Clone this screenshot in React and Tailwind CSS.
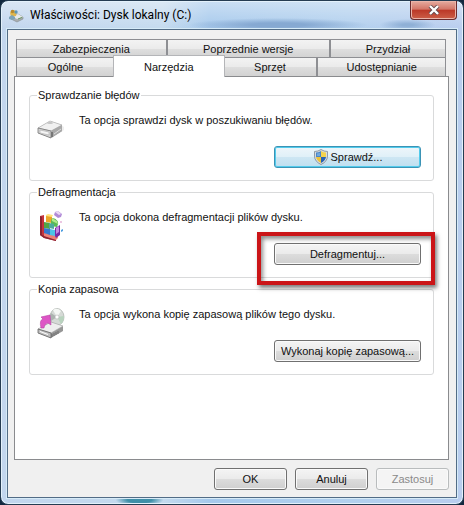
import React from "react";

const face =
  "h-[22px] rounded-[3px] border text-center leading-[18px] whitespace-nowrap";
const normalFace =
  "border-[#707070] bg-[linear-gradient(#f4f4f4,#ebebeb_48%,#dcdcdc_52%,#cfcfcf)] shadow-[inset_0_0_0_1px_#fafafa]";
const focusFace =
  "border-[#3b93b5] bg-[linear-gradient(#eef6fa,#e0f0f8_48%,#cde6f3_52%,#bfdff0)] shadow-[inset_0_0_0_1px_#52cbec]";
const disabledFace =
  "border-[#b9bcbd] bg-[#f4f4f4] text-[#8a8a8a] shadow-[inset_0_0_0_1px_#fafafa]";
const tabFace =
  "h-[19px] border border-[#8e8f93] border-b-0 bg-[linear-gradient(#f3f3f3,#ebebeb_48%,#dedede_52%,#d2d2d2)] leading-[18px]";

function TitleIcon() {
  return (
    <svg width="16" height="16" viewBox="0 0 16 16" aria-hidden="true">
      <path d="M3 9 10 7l5 3v2l-6 3-6-3z" fill="#a9aeb0" stroke="#858c90" strokeWidth=".6" />
      <path d="m3 9 7-2 5 3-6 2z" fill="#e6e9e9" />
      <path d="M2 5.5 6 3l3 2-1 4-5 1z" fill="#e0b64b" />
      <circle cx="4.5" cy="4.5" r="1.8" fill="#b8892e" />
      <circle cx="8" cy="5" r="1.7" fill="#5f96b5" />
      <path d="m1 10 3-2 3 2v2l-3 1-3-1z" fill="#7da3b8" />
      <path d="m10 12 4-1.600" stroke="#6c9964" />
    </svg>
  );
}

function DriveIcon() {
  return (
    <svg width="30" height="32" viewBox="0 0 30 32" aria-hidden="true">
      <path d="m2 19 13 6 12-8v-3l-3-2-10-4z" fill="#dedede" opacity=".5" />
      <path d="m1 15 12-7 12 4v6l-11 7L1 20z" fill="#929292" />
      <path d="m1 15 12-7 12 4-11 6z" fill="#f1f1f1" stroke="#b7b7b7" strokeWidth=".7" />
      <path d="m1 15 13 3v7L1 20z" fill="#d5d5d5" stroke="#777" strokeWidth=".8" />
      <path d="m3 17 9 2v3l-9-2z" fill="#f5f5f5" stroke="#a0a0a0" strokeWidth=".5" />
      <path d="m14 18 11-6v6l-11 7z" fill="#a9a9a9" />
      <path d="M15 19v5" stroke="#555" strokeWidth="1.200" />
      <path d="m17 21 7-5" stroke="#ddd" />
      <ellipse cx="13" cy="10" rx="3" ry="1" fill="#c4c4c4" />
    </svg>
  );
}

function DefragIcon() {
  return (
    <svg width="30" height="32" viewBox="0 0 30 32" aria-hidden="true">
      <path d="m3 6 4-1v18l12 3v5L7 28l-4-3z" fill="#c5343d" />
      <path d="m3 6 2 1v18l14 4v2L7 28l-4-3z" fill="#8d2433" />
      <path d="m7 23 12 3 2-1v3l-2 2-12-4z" fill="#ed8178" />
      <path d="m9 5 6 1v7l-6-1z" fill="#eda629" />
      <path d="m9 5 2-1 5 1-1 2-6-1z" fill="#ffe47b" />
      <path d="m7 12 6 1v6l-6-1z" fill="#51a644" />
      <path d="m14 11 1-3c3 0 7 3 6 6l-1 3-6-1z" fill="#5cba56" />
      <path d="m15 8 5 3 1 3-6-3z" fill="#b3e98b" />
      <path d="m7 18 6 1v6l-6-2z" fill="#3579d0" />
      <path d="m13 19 5 1v6l-5-1z" fill="#4cc3e7" />
      <path d="m12 13 5 1v5l-5-1z" fill="#4eaa9d" />
      <path d="m18 18 5-3v10l-4 3-1-2z" fill="#782ba6" />
      <path d="m19 18 3-2v6l-3 2z" fill="#c385e1" />
      <path d="m18 2 3-1 4 3-1 3-3 1-4-3z" fill="#b18bd7" />
      <path d="m18 2 4 3 2-1-3-3z" fill="#ead8f5" />
      <path d="m24 20 2-1v2l-2 1z" fill="#4d9ee0" />
      <path d="m23 12 1-1 1 1-1 1z" fill="#d98ec6" />
    </svg>
  );
}

function BackupIcon() {
  return (
    <svg width="30" height="32" viewBox="0 0 30 32" aria-hidden="true">
      <ellipse cx="20" cy="10" rx="7" ry="8.500" fill="#d5dad6" stroke="#a9afab" strokeWidth=".7" />
      <path d="M20 10 16 3q4-3 8 1z" fill="#f5f8f5" />
      <path d="m20 10 7-1q0 5-3 8z" fill="#b8d3be" />
      <path d="m20 10-6-4q-2 4 0 8z" fill="#acb4b0" />
      <circle cx="20" cy="10" r="2" fill="#fff" stroke="#aaa" strokeWidth=".5" />
      <path d="m1 22 13-7 12 4v5l-12 7-13-5z" fill="#969696" />
      <path d="m1 22 13-7 12 4-12 7z" fill="#eee" stroke="#aaa" strokeWidth=".6" />
      <path d="m1 22 13 4v5L1 26z" fill="#bdbdbd" stroke="#666" strokeWidth=".8" />
      <path d="m3 24 8 3v1l-8-3z" fill="#fff" />
      <path d="M15 27v3m2-4v3m2-4v3m2-4v3" stroke="#666" strokeWidth=".8" />
      <path d="M4 21Q2 13 6 12L4 10l9-2 1 10-3-2q-4 1-4 5z" fill="#dd55c5" stroke="#b940a4" strokeWidth=".6" />
    </svg>
  );
}

function ShieldIcon() {
  return (
    <svg width="16" height="16" viewBox="0 0 16 16" aria-hidden="true">
      <path d="M8 .5Q5 2.500 1.500 2.500V7q0 5.500 6.500 8.500 6.500-3 6.500-8.500V2.500Q11 2.500 8 .5" fill="#d7dde2" stroke="#7c8790" strokeWidth=".8" />
      <path d="M8 2Q5.500 3.500 3 3.500V8h5z" fill="#4a86c8" />
      <path d="M8 2q2.500 1.500 5 1.500V8H8z" fill="#f3d34d" />
      <path d="M3 8h5v6Q3.500 11.500 3 8" fill="#eec338" />
      <path d="M8 8h5q-.5 3.500-5 6z" fill="#2763b5" />
      <path d="M4 4.500 7 4v3H4z" fill="#72a9dc" />
    </svg>
  );
}

function Group({ title, text, icon, children }) {
  return (
    <fieldset className="flex h-[93px] flex-col rounded-[3px] border border-[#d9dadb] pr-3 pl-[7px]">
      <legend className="px-px leading-[14px]">{title}</legend>
      <div className="flex h-11 items-start gap-3 pt-[11px]">
        {icon}
        <p className="leading-[14px]">{text}</p>
      </div>
      <div className="flex justify-end">{children}</div>
    </fieldset>
  );
}

export default function App() {
  return (
    <div className="flex min-h-screen bg-[#12283f] font-['Liberation_Sans',Arial,sans-serif] text-[11px] text-[#111]">
      <main className="flex flex-1 flex-col rounded-[8px] border border-[#253c52] bg-[radial-gradient(90px_7px_at_60%_24px,#86a9d2_30%,#86a9d200),radial-gradient(28px_6px_at_88%_24px,#8fb0d6_20%,#8fb0d600),radial-gradient(24px_6px_at_30%_calc(100%_-_4px),#3f8fa8_50%,#3f8fa800),linear-gradient(#ffffff66,#ffffff00_28px),linear-gradient(90deg,#c2d6ee,#c4daee_35%,#a6c9ec_45%,#b2d0ee_75%,#b9cdee)] px-[6px] pb-[6px] shadow-[inset_0_0_0_1px_#e3f1fb]">
        <header className="flex h-7 items-start justify-between pl-px">
          <div className="flex h-7 items-center gap-[6px]">
            <TitleIcon />
            <h1 className="font-[Roboto,'Noto_Sans',sans-serif] text-[12px] leading-4 text-black">
              Właściwości: Dysk lokalny (C:)
            </h1>
          </div>
          <button
            type="button"
            aria-label="Zamknij"
            className="flex h-[19px] w-[47px] items-center justify-center rounded-b-[4px] border border-t-0 border-[#6a2b2e] bg-[linear-gradient(#e6aca0,#d37567_46%,#bb3727_50%,#cc5f48)] shadow-[inset_0_0_0_1px_#eab4a9]"
          >
            <svg width="12" height="10" viewBox="0 0 12 10" aria-hidden="true">
              <path d="m2 1 8 8m0-8L2 9" stroke="#62484d" strokeWidth="4" />
              <path d="m2 1 8 8m0-8L2 9" stroke="#fff" strokeWidth="2.400" />
            </svg>
          </button>
        </header>

        <section className="flex flex-1 flex-col border border-[#526c86] bg-[#f0f0f0] pt-[9px] pr-[7px] pb-[7px] pl-[6px] shadow-[0_0_0_1px_#d6ebf8]">
          <div role="tablist" className="pr-[3px] pl-[2px]">
            <div className="flex">
              <button type="button" role="tab" className={`${tabFace} w-[35%]`}>
                Zabezpieczenia
              </button>
              <button type="button" role="tab" className={`${tabFace} w-[38%]`}>
                Poprzednie wersje
              </button>
              <button type="button" role="tab" className={`${tabFace} flex-1`}>
                Przydział
              </button>
            </div>
            <div className="-mt-px flex">
              <button type="button" role="tab" className={`${tabFace} w-[23%]`}>
                Ogólne
              </button>
              <button
                type="button"
                role="tab"
                aria-selected="true"
                className="relative z-10 -mx-[2px] -mt-[2px] -mb-px h-[22px] w-[26%] border border-b-0 border-[#b4b5b8] bg-white leading-[18px]"
              >
                Narzędzia
              </button>
              <button type="button" role="tab" className={`${tabFace} w-[22%]`}>
                Sprzęt
              </button>
              <button type="button" role="tab" className={`${tabFace} flex-1`}>
                Udostępnianie
              </button>
            </div>
          </div>

          <div
            role="tabpanel"
            className="flex flex-1 flex-col gap-1 border border-[#8a8b8e] bg-white px-[14px] pt-[11px]"
          >
            <Group
              title="Sprawdzanie błędów"
              text="Ta opcja sprawdzi dysk w poszukiwaniu błędów."
              icon={<DriveIcon />}
            >
              <button
                type="button"
                className={`${face} ${focusFace} flex w-[147px] items-center justify-center gap-[2px]`}
              >
                <ShieldIcon />
                Sprawdź...
              </button>
            </Group>
            <Group
              title="Defragmentacja"
              text="Ta opcja dokona defragmentacji plików dysku."
              icon={<DefragIcon />}
            >
              <div className="relative">
                <button type="button" className={`${face} ${normalFace} w-[147px]`}>
                  Defragmentuj...
                </button>
                <div className="pointer-events-none absolute -top-[11px] -right-[14px] -bottom-[20px] -left-[17px] border-4 border-[#cb1518] shadow-[2px_3px_4px_#00000080,inset_2px_3px_4px_#00000070]" />
              </div>
            </Group>
            <Group
              title="Kopia zapasowa"
              text="Ta opcja wykona kopię zapasową plików tego dysku."
              icon={<BackupIcon />}
            >
              <button type="button" className={`${face} ${normalFace} w-[147px]`}>
                Wykonaj kopię zapasową...
              </button>
            </Group>
          </div>

          <footer className="flex justify-end gap-2 pt-2">
            <button type="button" className={`${face} ${normalFace} w-[73px]`}>
              OK
            </button>
            <button type="button" className={`${face} ${normalFace} w-[73px]`}>
              Anuluj
            </button>
            <button type="button" disabled className={`${face} ${disabledFace} w-[73px]`}>
              Zastosuj
            </button>
          </footer>
        </section>
      </main>
    </div>
  );
}
